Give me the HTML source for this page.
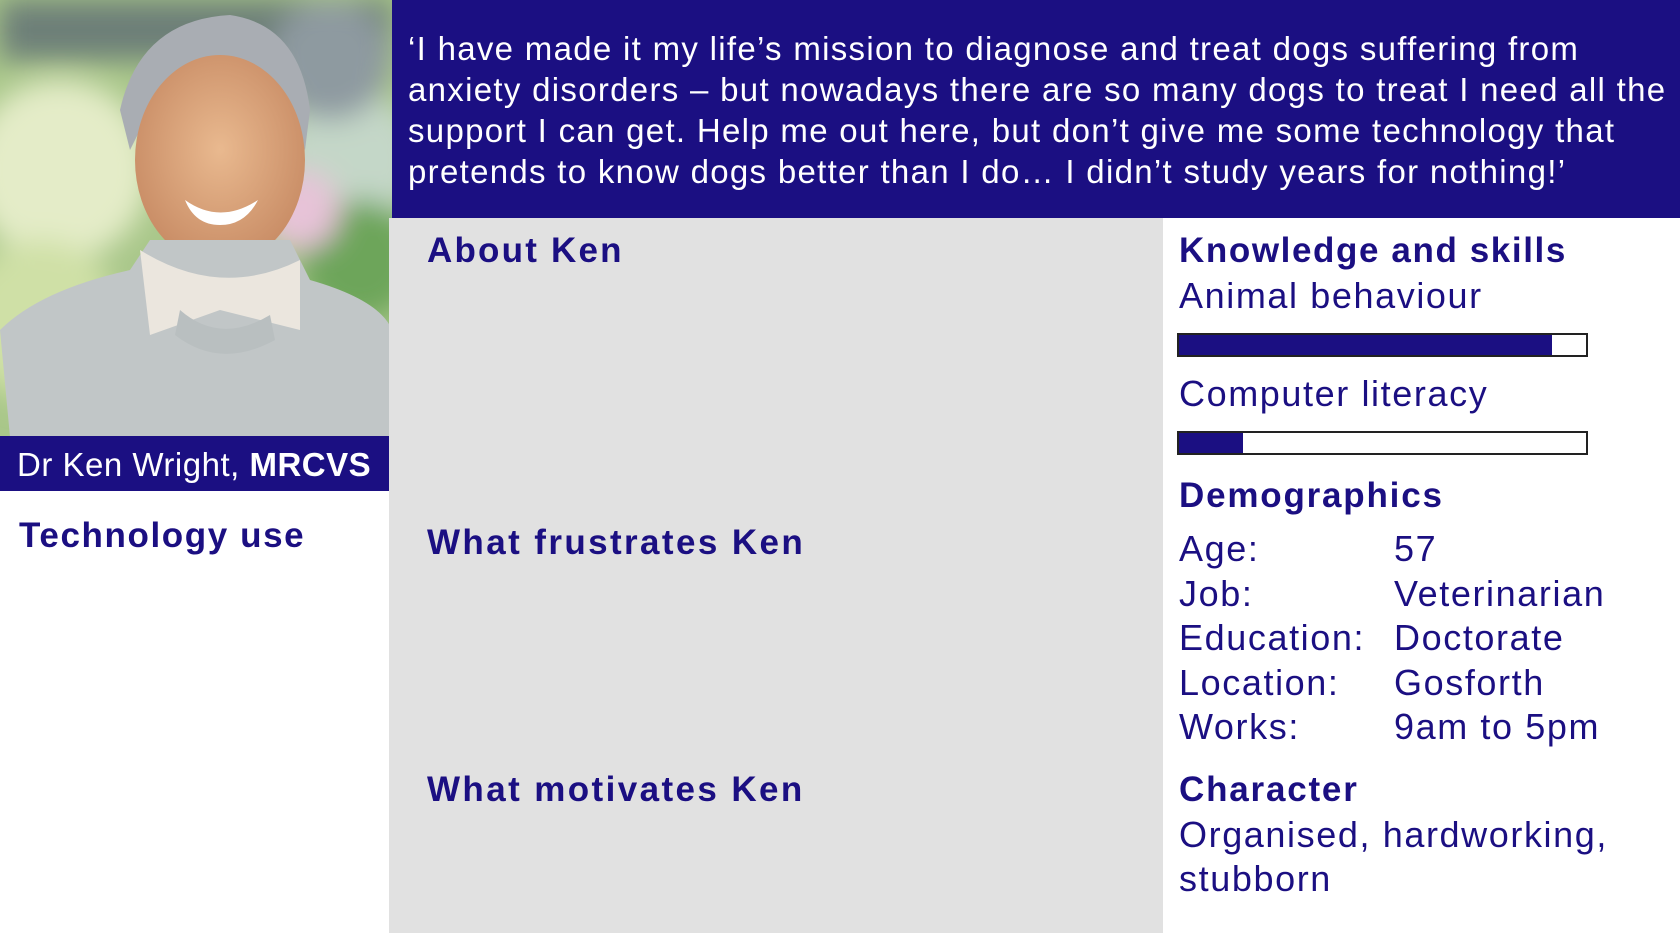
<!DOCTYPE html>
<html><head><meta charset="utf-8">
<style>
*{margin:0;padding:0;box-sizing:border-box}
body{width:1680px;height:933px;position:relative;overflow:hidden;background:#fff;font-family:"Liberation Sans",sans-serif;color:#1b0f82}
.abs{position:absolute;white-space:nowrap}
.h{font-weight:bold;font-size:35px;line-height:40px;letter-spacing:1.8px}
.r{font-size:36px;line-height:44px;letter-spacing:1.6px}
</style></head><body>
<svg class="abs" style="left:0;top:0" width="392" height="437" viewBox="0 0 392 437">
<defs>
<filter id="b"><feGaussianBlur stdDeviation="14"/></filter>
<radialGradient id="f" cx="50%" cy="45%" r="55%"><stop offset="0" stop-color="#e9b98f"/><stop offset="1" stop-color="#c98d66"/></radialGradient>
</defs>
<rect width="392" height="437" fill="#a9c78a"/>
<g filter="url(#b)">
<rect x="0" y="0" width="392" height="60" fill="#6d7f78"/>
<circle cx="60" cy="170" r="90" fill="#e4ecc8"/>
<circle cx="40" cy="320" r="80" fill="#cfe0a6"/>
<circle cx="350" cy="160" r="70" fill="#c4d7c8"/>
<circle cx="360" cy="260" r="60" fill="#6da55a"/>
<circle cx="300" cy="210" r="40" fill="#e7c3d8"/>
<circle cx="330" cy="60" r="60" fill="#8e9aa0"/>
</g>
<path d="M120 110 Q140 20 230 15 Q300 25 310 110 L305 150 L290 110 Q220 90 140 130 L130 150 Z" fill="#a9adb3"/>
<ellipse cx="220" cy="160" rx="85" ry="105" fill="url(#f)"/>
<path d="M185 200 Q220 225 258 200 Q245 225 220 225 Q195 225 185 200Z" fill="#fff"/>
<path d="M10 437 L0 330 Q40 290 130 270 L150 240 L290 240 L310 280 Q380 300 392 330 L392 437Z" fill="#c1c6c7"/>
<path d="M140 250 L150 335 L220 310 L300 330 L300 260 Q220 300 140 250Z" fill="#ebe6de"/>
<path d="M180 310 Q220 345 270 315 L275 340 Q220 370 175 335Z" fill="#b9bfc0"/>
</svg>
<div class="abs" style="left:0;top:436px;width:392px;height:55px;background:#1b0f82;color:#fff;font-size:33px;line-height:57px;padding-left:17px;letter-spacing:0.5px">Dr Ken Wright, <b>MRCVS</b></div>
<div class="abs" style="left:392px;top:0;width:1288px;height:218px;background:#1b0f82"></div>
<div class="abs" style="left:408px;top:28px;color:#fff;font-size:33px;line-height:41px;letter-spacing:1.3px">‘I have made it my life’s mission to diagnose and treat dogs suffering from<br>anxiety disorders – but nowadays there are so many dogs to treat I need all the<br>support I can get. Help me out here, but don’t give me some technology that<br>pretends to know dogs better than I do… I didn’t study years for nothing!’</div>
<div class="abs" style="left:389px;top:218px;width:774px;height:715px;background:#e1e1e1"></div>
<div class="abs h" style="left:19px;top:516px;letter-spacing:1.6px">Technology use</div>
<div class="abs h" style="left:427px;top:231px;letter-spacing:2.2px">About Ken</div>
<div class="abs h" style="left:427px;top:523px;letter-spacing:2.4px">What frustrates Ken</div>
<div class="abs h" style="left:427px;top:770px;letter-spacing:2.4px">What motivates Ken</div>
<div class="abs h" style="left:1179px;top:231px;letter-spacing:1.6px">Knowledge and skills</div>
<div class="abs r" style="left:1179px;top:274px">Animal behaviour</div>
<div class="abs" style="left:1177px;top:333px;width:411px;height:24px;border:2px solid #222;background:#fff"><div style="width:373px;height:100%;background:#1b0f82"></div></div>
<div class="abs r" style="left:1179px;top:372px">Computer literacy</div>
<div class="abs" style="left:1177px;top:431px;width:411px;height:24px;border:2px solid #222;background:#fff"><div style="width:64px;height:100%;background:#1b0f82"></div></div>
<div class="abs h" style="left:1179px;top:476px">Demographics</div>
<div class="abs r" style="left:1179px;top:527px;line-height:44.6px">Age:<br>Job:<br>Education:<br>Location:<br>Works:</div>
<div class="abs r" style="left:1394px;top:527px;line-height:44.6px">57<br>Veterinarian<br>Doctorate<br>Gosforth<br>9am to 5pm</div>
<div class="abs h" style="left:1179px;top:770px">Character</div>
<div class="abs r" style="left:1179px;top:813px">Organised, hardworking,<br>stubborn</div>
</body></html>
